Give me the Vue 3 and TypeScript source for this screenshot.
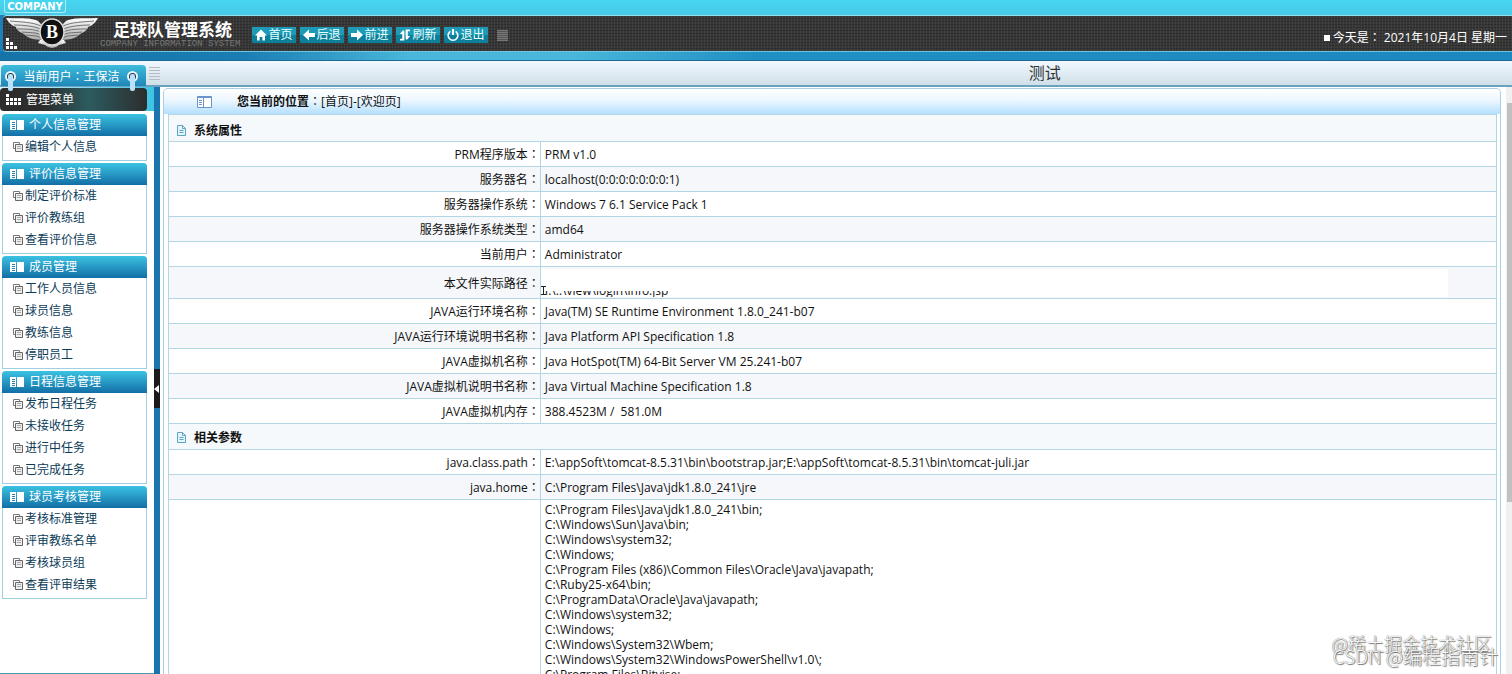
<script setup lang="ts">
interface NavItem { label: string; icon: string }
interface MenuGroup { title: string; items: string[] }
interface Row { label: string; value: string; masked?: boolean }

const nav: NavItem[] = [
  { label: '首页', icon: 'M6 0.5 L12 6.5 H10 V11.5 H7.4 V8 H4.6 V11.5 H2 V6.5 H0 Z' },
  { label: '后退', icon: 'M0 6 L6 0.5 V4 H12 V8 H6 V11.5 Z' },
  { label: '前进', icon: 'M12 6 L6 0.5 V4 H0 V8 H6 V11.5 Z' },
  { label: '刷新', icon: 'M1 11.5 V9.8 H3.2 V5 H0.8 L4.2 1 L5.4 2.4 V11.5 Z M11 0.5 V2.2 H8.8 V7 H11.2 L7.8 11 L6.6 9.6 V0.5 Z' },
  { label: '退出', icon: 'M5 0 H7 V6 H5 Z M3.4 1.4 V3.4 A4 4 0 1 0 8.6 3.4 V1.4 A5.6 5.6 0 1 1 3.4 1.4 Z' },
]

const menu: MenuGroup[] = [
  { title: '个人信息管理', items: ['编辑个人信息'] },
  { title: '评价信息管理', items: ['制定评价标准', '评价教练组', '查看评价信息'] },
  { title: '成员管理', items: ['工作人员信息', '球员信息', '教练信息', '停职员工'] },
  { title: '日程信息管理', items: ['发布日程任务', '未接收任务', '进行中任务', '已完成任务'] },
  { title: '球员考核管理', items: ['考核标准管理', '评审教练名单', '考核球员组', '查看评审结果'] },
]

const system: Row[] = [
  { label: 'PRM程序版本', value: 'PRM v1.0' },
  { label: '服务器名', value: 'localhost(0:0:0:0:0:0:0:1)' },
  { label: '服务器操作系统', value: 'Windows 7 6.1 Service Pack 1' },
  { label: '服务器操作系统类型', value: 'amd64' },
  { label: '当前用户', value: 'Administrator' },
  { label: '本文件实际路径', value: 'I:\\..\\view\\login\\info.jsp', masked: true },
  { label: 'JAVA运行环境名称', value: 'Java(TM) SE Runtime Environment 1.8.0_241-b07' },
  { label: 'JAVA运行环境说明书名称', value: 'Java Platform API Specification 1.8' },
  { label: 'JAVA虚拟机名称', value: 'Java HotSpot(TM) 64-Bit Server VM 25.241-b07' },
  { label: 'JAVA虚拟机说明书名称', value: 'Java Virtual Machine Specification 1.8' },
  { label: 'JAVA虚拟机内存', value: '388.4523M /  581.0M' },
]

const params: Row[] = [
  { label: 'java.class.path', value: 'E:\\appSoft\\tomcat-8.5.31\\bin\\bootstrap.jar;E:\\appSoft\\tomcat-8.5.31\\bin\\tomcat-juli.jar' },
  { label: 'java.home', value: 'C:\\Program Files\\Java\\jdk1.8.0_241\\jre' },
]

const libraryPath: string[] = [
  'C:\\Program Files\\Java\\jdk1.8.0_241\\bin;',
  'C:\\Windows\\Sun\\Java\\bin;',
  'C:\\Windows\\system32;',
  'C:\\Windows;',
  'C:\\Program Files (x86)\\Common Files\\Oracle\\Java\\javapath;',
  'C:\\Ruby25-x64\\bin;',
  'C:\\ProgramData\\Oracle\\Java\\javapath;',
  'C:\\Windows\\system32;',
  'C:\\Windows;',
  'C:\\Windows\\System32\\Wbem;',
  'C:\\Windows\\System32\\WindowsPowerShell\\v1.0\\;',
  'C:\\Program Files\\Bitvise;',
]
</script>

<template>
  <div class="page">
    <div class="topstrip"><span class="company">COMPANY</span></div>
    <header class="header">
      <div class="logo-zone">
        <svg class="steps" viewBox="0 0 12 12" aria-hidden="true">
          <path fill="#fff" d="M0 0h3v3h-3zM0 4h3v3h-3zM4 4h3v3h-3zM0 8h3v3h-3zM4 8h3v3h-3zM8 8h3v3h-3z" />
        </svg>
        <svg class="wings" viewBox="0 0 92 32" aria-hidden="true">
          <defs>
            <linearGradient id="silver" x1="0" y1="0" x2="0" y2="1">
              <stop offset="0" stop-color="#fff" /><stop offset="1" stop-color="#aaa" />
            </linearGradient>
          </defs>
          <g id="wing">
            <path fill="url(#silver)" d="M0 1 C12 2 24 0 32 4 L37 9 L37 23 C27 23 20 20 18 17 C13 15 10 12 10 10 C4 8 2 4 0 1 Z" />
            <path fill="none" stroke="#555" stroke-width="0.8" d="M4 4 C15 5 26 5 35 9 M8 8 C18 8 27 9 35 12 M11 12 C20 12 28 12 35 15 M16 15 C24 16 30 15 35 18 M20 18 C27 19 31 18 35 21" />
          </g>
          <use href="#wing" transform="matrix(-1 0 0 1 92 0)" />
          <path fill="url(#silver)" d="M34 23 L32 26 L39 28 L42 30 L46 31 L50 30 L53 28 L60 26 L58 23 Z" />
          <ellipse cx="46" cy="15" rx="12" ry="13" fill="#111" stroke="#ddd" stroke-width="1.5" />
          <text x="46" y="21" class="emblem" text-anchor="middle">B</text>
        </svg>
      </div>
      <div class="brand">
        <h1>足球队管理系统</h1>
        <p>COMPANY INFORMATION SYSTEM</p>
      </div>
      <nav class="nav">
        <button v-for="n in nav" :key="n.label" type="button">
          <svg viewBox="0 0 12 12" aria-hidden="true"><path :d="n.icon" fill="#fff" fill-rule="evenodd" /></svg>{{ n.label }}
        </button>
      </nav>
      <div class="grip"></div>
      <div class="today"><i></i><span>今天是<span class="colon">：</span> 2021年10月4日 星期一</span></div>
    </header>
    <div class="band"></div>

    <div class="titlebar">
      <div class="user">
        <span class="ring"></span><span>当前用户<span class="colon">：</span>王保洁</span><span class="ring"></span>
      </div>
      <div class="grip light"></div>
      <div class="title">测试</div>
    </div>

    <div class="body">
      <aside class="side">
        <div class="menu-head">
          <div class="menu-title">
            <svg viewBox="0 0 16 11" aria-hidden="true">
              <path fill="#fff" d="M0 0h3v3h-3zM0 4h3v3h-3zM4 4h3v3h-3zM8 4h3v3h-3zM12 4h3v3h-3zM0 8h3v3h-3zM4 8h3v3h-3zM8 8h3v3h-3zM12 8h3v3h-3z" />
            </svg>管理菜单
          </div>
        </div>
        <section v-for="g in menu" :key="g.title" class="group">
          <h2>
            <svg viewBox="0 0 14 10" aria-hidden="true">
              <path fill="#fff" d="M0 0h6v10h-6z M7 0h7v10h-7z" />
              <path stroke="#2b7fb5" d="M2 2.5h3M2 4.5h3M2 6.5h3M2 8.5h3" />
            </svg>{{ g.title }}
          </h2>
          <ul>
            <li v-for="i in g.items" :key="i">
              <a href="#">
                <svg viewBox="0 0 10 10" aria-hidden="true">
                  <path fill="none" stroke="#777" d="M2.5 6.5h-2v-6h6v2" />
                  <path fill="#eee" stroke="#666" d="M2.5 2.5h7v7h-7z" />
                  <path stroke="#aaa" d="M4 4.5h4M4 6.5h4" />
                </svg>{{ i }}
              </a>
            </li>
          </ul>
        </section>
      </aside>
      <button class="splitter" type="button" aria-label="收起菜单"><span></span></button>

      <main class="main">
        <div class="panel">
          <div class="crumbs">
            <svg viewBox="0 0 15 12" aria-hidden="true">
              <path fill="#fff" stroke="#6b93cc" d="M0.5 0.5h14v11h-14z" />
              <path stroke="#6b93cc" d="M0.5 1.5h14M6.5 1v11M2 4.5h3M2 6.5h3M2 8.5h3" />
            </svg>
            <div><b>您当前的位置</b><span class="colon">：</span><a href="#">[首页]</a>-<a href="#">[欢迎页]</a></div>
          </div>
          <table class="info">
            <colgroup><col class="c1" /><col /></colgroup>
            <tbody>
              <tr class="sec first">
                <th colspan="2">
                  <svg viewBox="0 0 9 11" aria-hidden="true"><path fill="#e4f5fb" stroke="#5fa4c0" d="M0.5 0.5h5l3 3v7h-8zM5.5 0.5v3h3M2.5 5.5h4M2.5 7.5h4" /></svg>系统属性
                </th>
              </tr>
              <tr v-for="(r, n) in system" :key="r.label" :class="{ alt: n % 2, tall: r.masked }">
                <th scope="row">{{ r.label }}<span class="colon">：</span></th>
                <td v-if="r.masked" class="masked">
                  <div class="patch"><div class="sliver"><span>{{ r.value }}</span></div></div>
                  <svg class="caret" viewBox="0 0 5 9" aria-hidden="true"><path fill="none" stroke="#222" d="M0 0.5h5M2.5 0v9M0 8.5h5" /></svg>
                </td>
                <td v-else>{{ r.value }}</td>
              </tr>
              <tr class="sec">
                <th colspan="2">
                  <svg viewBox="0 0 9 11" aria-hidden="true"><path fill="#e4f5fb" stroke="#5fa4c0" d="M0.5 0.5h5l3 3v7h-8zM5.5 0.5v3h3M2.5 5.5h4M2.5 7.5h4" /></svg>相关参数
                </th>
              </tr>
              <tr v-for="(r, n) in params" :key="r.label" :class="{ alt: n % 2 }">
                <th scope="row">{{ r.label }}<span class="colon">：</span></th>
                <td>{{ r.value }}</td>
              </tr>
              <tr>
                <th></th>
                <td class="paths"><div v-for="(p, n) in libraryPath" :key="n">{{ p }}</div></td>
              </tr>
            </tbody>
          </table>
        </div>
      </main>
      <div class="scroll"><div class="up"></div><div class="thumb"></div></div>
    </div>

    <div class="watermark wm1">@稀土掘金技术社区</div>
    <div class="watermark wm2">CSDN @编程指南针</div>
  </div>
</template>

<style>
html, body { margin: 0; overflow: hidden; }
</style>

<style scoped>
* { box-sizing: border-box; }
.page {
  position: relative;
  height: 100vh;
  display: flex;
  flex-direction: column;
  overflow: hidden;
  background: linear-gradient(#45d6f2 0 15px, #1b7fb8 15px 61px, #fff 61px);
  color: #111;
  font: 12px/16px "Open Sans", "Noto Sans CJK SC", sans-serif;
}
h1, h2, p, ul { margin: 0; padding: 0; }
ul { list-style: none; }
a { color: inherit; text-decoration: none; }
svg { flex: none; }
.colon { font-family: "Noto Sans CJK TC", sans-serif; }

.topstrip { flex: none; height: 15px; padding-left: 4px; background: linear-gradient(#45d6f2, #48c8e6); }
.company {
  display: block;
  width: 62px;
  height: 13px;
  border: 1px solid #a9ecf8;
  border-top: 0;
  border-radius: 0 0 3px 3px;
  text-align: center;
  color: #fff;
  font: bold 10px/13px "DejaVu Sans", sans-serif;
}
.header {
  flex: none;
  height: 37px;
  display: flex;
  align-items: center;
  padding-right: 5px;
  margin-left: 3px;
  border-top: 1px solid #8fe3f0;
  border-bottom: 1px solid #6cc5da;
  border-radius: 4px 0 0 4px;
  background:
    repeating-linear-gradient(90deg, transparent 0 2px, rgba(255, 255, 255, 0.05) 2px 3px),
    repeating-linear-gradient(#373737 0 2px, #2c2c2c 2px 3px);
}
.logo-zone { width: 97px; height: 35px; display: flex; align-items: flex-end; }
.steps { width: 12px; height: 12px; margin: 0 -12px 1px 3px; }
.wings { width: 92px; height: 32px; align-self: flex-start; margin-top: 1px; }
.emblem { fill: #fff; font: bold 18px "Liberation Serif", serif; }
.brand { width: 152px; }
.brand h1 { padding-left: 13px; color: #fff; font: bold 17px/20px "Noto Sans CJK SC", sans-serif; }
.brand p { color: #777; font: 9px/10px "Liberation Mono", monospace; white-space: nowrap; }
.nav { display: flex; gap: 4px; padding-top: 3px; }
.nav button {
  width: 44px;
  height: 16px;
  display: flex;
  align-items: center;
  justify-content: center;
  gap: 1px;
  padding: 0;
  border: 0;
  color: #e8ffff;
  background: linear-gradient(#1d9ab5 0 50%, #0d7f9b 50%);
  font: inherit;
}
.nav svg { width: 12px; height: 12px; }
.grip { width: 11px; height: 11px; margin: 4px 0 0 9px; background: repeating-linear-gradient(#777 0 1px, #555 1px 2px); }
.grip.light { height: 13px; margin: 0; background: repeating-linear-gradient(#b5bcc2 0 1px, transparent 1px 3px); }
.today { margin-left: auto; display: flex; align-items: center; gap: 3px; color: #fff; padding-top: 8px; }
.today i { width: 6px; height: 6px; background: #fff; }
.band {
  flex: none;
  height: 9px;
  border-bottom: 1px solid #1a6a96;
  background: linear-gradient(90deg, #1673a8, #1a7db3 16%, #49b6da 27%, #49b6da 38%, #2090c4 50%, #1d87bf);
}
.titlebar {
  flex: none;
  height: 26px;
  display: flex;
  align-items: center;
  border-bottom: 2px solid #6aa2c0;
  background: linear-gradient(#f2f8ff, #d0e0e8);
}
.user {
  flex: none;
  width: 145px;
  height: 21px;
  margin: 4px 3px 0 1px;
  padding: 3px 8px 0 4px;
  display: flex;
  align-items: center;
  justify-content: space-between;
  border-radius: 4px 4px 0 0;
  color: #fff;
  background: linear-gradient(#3dbcdc, #2086b8);
}
.ring { position: relative; width: 11px; height: 11px; border: 2px solid #e8f6ff; border-radius: 50%; background: #234; }
.ring::after { content: ""; position: absolute; z-index: 2; left: 1px; top: 1px; width: 5px; height: 17px; border-radius: 2px; background: #b9e2fa; }
.title { margin-left: 57%; padding-left: 7px; font-size: 16px; line-height: 24px; color: #333; }

.body { flex: 1; min-height: 0; display: flex; background: #fff; }
.side { flex: none; width: 154px; overflow: hidden; border-bottom: 1px solid #4a9aae; }
.menu-head { height: 24px; padding: 1px 7px 0 0; margin-bottom: 3px; background: linear-gradient(90deg, #d8f3fa, #3cc4e4); }
.menu-title {
  height: 23px;
  display: flex;
  align-items: center;
  gap: 4px;
  padding-left: 6px;
  border-radius: 4px;
  color: #fff;
  background: linear-gradient(90deg, #2d2d2d 30%, #2c5c60 60%, #2d2d2d);
}
.menu-title svg { width: 16px; height: 11px; }
.group { margin: 0 7px 2px 2px; border: 1px solid #9fd0e2; border-top: 0; padding-bottom: 2px; border-radius: 4px 4px 0 0; }
.group h2 {
  height: 22px;
  margin: 0 -1px;
  padding-left: 8px;
  display: flex;
  align-items: center;
  gap: 5px;
  border-radius: 4px 4px 0 0;
  color: #fff;
  background: linear-gradient(#3bc2e2, #126fa6);
  font: inherit;
}
.group h2 svg { width: 14px; height: 10px; }
.group a { height: 22px; display: flex; align-items: center; gap: 2px; padding-left: 10px; color: #0c3c58; }
.group a svg { width: 10px; height: 10px; }
.splitter { position: relative; flex: none; width: 6px; padding: 0; border: 0; background: #1a75ae; }
.splitter span { position: absolute; left: 0; top: 50%; width: 6px; height: 39px; margin-top: -12px; background: #1a1a1a; }
.splitter span::after { content: ""; position: absolute; left: 0; top: 16px; border: 4px solid transparent; border-left: 0; border-right: 5px solid #fff; }

.main { flex: 1; min-width: 0; padding: 1px 5px 0 3px; overflow: hidden; }
.panel { border: 1px solid #a9cfe8; border-bottom: 0; border-radius: 5px 5px 0 0; padding: 0 3px 0 4px; height: 100%; overflow: hidden; background: #fff; }
.crumbs {
  height: 25px;
  margin: 0 -3px 0 -4px;
  padding-left: 33px;
  display: flex;
  align-items: center;
  gap: 25px;
  background: linear-gradient(#fff, #edf7ff 45%, #b4e0ff);
}
.crumbs svg { width: 15px; height: 12px; }
.info { width: 100%; border-collapse: collapse; table-layout: fixed; border: 1px solid #b3d6e4; }
.c1 { width: 28%; }
.info td, .info th { height: 25px; padding: 1px 4px 0; border: 1px solid #b3d6e4; font-weight: normal; line-height: 16px; white-space: pre; }
.info th { text-align: right; padding-right: 0; }
.info .sec th { height: 26px; padding: 3px 0 0 8px; text-align: left; font-weight: bold; background: #f5f9fb; }
.info .first th { height: 27px; padding-top: 5px; }
.info .sec svg { width: 9px; height: 11px; margin-right: 8px; vertical-align: -1px; }
.info .alt th, .info .alt td { background: #f5f7fa; }
.info .tall th { height: 32px; }
.info .tall .masked { position: relative; padding: 0; white-space: nowrap; }
.patch { width: 95%; height: 28px; display: flex; align-items: flex-end; background: #fff; }
.sliver { height: 6px; padding-left: 4px; display: flex; align-items: flex-end; overflow: hidden; line-height: 13px; }
.caret { position: absolute; left: 0; bottom: 3px; width: 5px; height: 9px; }
.info .paths { line-height: 15px; padding-top: 2px; }

.scroll { flex: none; width: 6px; background: #f0f0f0; }
.up { height: 16px; }
.thumb { height: 68%; margin-left: 1px; background: #c1c1c1; }
.watermark { position: absolute; z-index: 3; color: #fff; font-size: 18px; line-height: 22px; white-space: nowrap; font-family: "Noto Sans CJK SC", sans-serif; font-weight: 300; text-shadow: 0 0 1px #444, 1px 1px 1px #777; }
.wm1 { right: 20px; bottom: 20px; }
.wm2 { right: 14px; bottom: 7px; font-size: 19px; }
</style>
